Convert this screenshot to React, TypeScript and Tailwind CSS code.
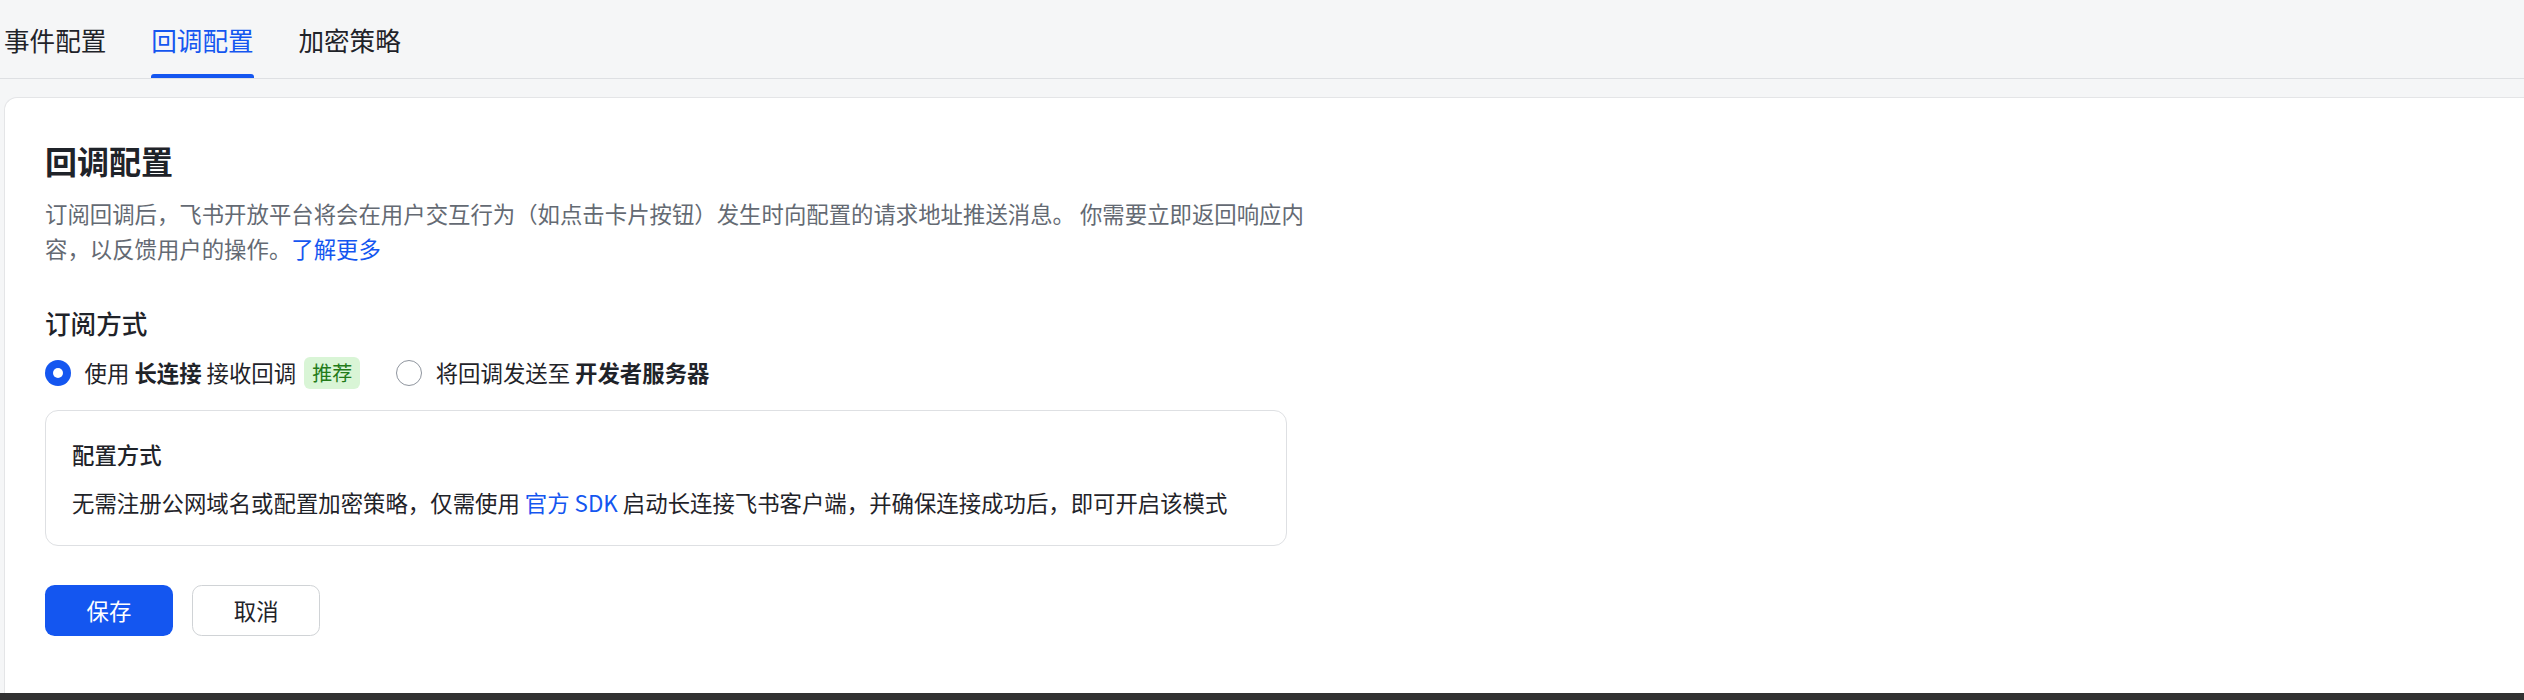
import React from "react";

const tabs = ["事件配置", "回调配置", "加密策略"];

function Tabs() {
  return (
    <div className="flex gap-[44.8px] border-b-[1.5px] border-[#dee0e3] pl-[4px] h-[78.5px]">
      {tabs.map((t, i) => {
        const active = i === 1;
        return (
          <div key={t} className="flex flex-col">
            <div
              className={
                "pt-[21px] leading-[38px] text-[25.6px] " +
                (active ? "text-[#1456f0]" : "text-[#1f2329]")
              }
            >
              {t}
            </div>
            <div className="flex-1" />
            <div
              className={
                "h-[4px] rounded-t-[3px] " + (active ? "bg-[#1456f0]" : "bg-transparent")
              }
            />
          </div>
        );
      })}
    </div>
  );
}

function Radio({ checked }: { checked: boolean }) {
  return checked ? (
    <span className="w-[25.6px] h-[25.6px] rounded-full bg-[#1456f0] flex items-center justify-center shrink-0">
      <span className="w-[10px] h-[10px] rounded-full bg-white" />
    </span>
  ) : (
    <span className="w-[25.6px] h-[25.6px] rounded-full border-[1.6px] border-[#8f959e] bg-white shrink-0" />
  );
}

export default function App() {
  return (
    <div className="min-h-[700px] h-[700px] flex flex-col bg-[#f5f6f7] font-['Noto_Sans_CJK_SC','Noto_Sans',sans-serif] text-[#1f2329]">
      <Tabs />

      <div className="flex-1 mt-[18.5px] ml-[4px] bg-white border-t border-l border-[#e4e5e7] rounded-tl-[13px] p-[40px]">
        <h1 className="text-[32px] leading-[44.8px] font-semibold text-[#1f2329]">回调配置</h1>
        <p className="mt-[12.8px] max-w-[1268px] text-[22.4px] leading-[35.2px] text-[#646a73]">
          订阅回调后，飞书开放平台将会在用户交互行为（如点击卡片按钮）发生时向配置的请求地址推送消息。 你需要立即返回响应内容，以反馈用户的操作。<a href="#" className="text-[#1456f0]">了解更多</a>
        </p>

        <h2 className="mt-[38.4px] text-[25.6px] leading-[38.4px] font-medium">订阅方式</h2>

        <div className="mt-[12.8px] flex items-center h-[35.2px] text-[22.4px]">
          <label className="flex items-center gap-[14px]">
            <Radio checked />
            <span>
              使用 <span className="font-semibold">长连接</span> 接收回调
            </span>
          </label>
          <span className="ml-[8px] h-[32px] px-[8px] rounded-[6px] bg-[#d9f5d6] text-[#237b19] text-[20px] leading-[32px]">
            推荐
          </span>
          <label className="ml-[36px] flex items-center gap-[14px]">
            <Radio checked={false} />
            <span>
              将回调发送至 <span className="font-semibold">开发者服务器</span>
            </span>
          </label>
        </div>

        <div className="mt-[19.2px] w-[1242px] border-[1.5px] border-[#dee0e3] rounded-[13px] px-[26px] py-[25.6px]">
          <div className="text-[22.4px] leading-[35.2px] font-medium">配置方式</div>
          <div className="mt-[12.8px] text-[22.4px] leading-[35.2px]">
            无需注册公网域名或配置加密策略，仅需使用 <a href="#" className="text-[#1456f0]">官方 SDK</a> 启动长连接飞书客户端，并确保连接成功后，即可开启该模式
          </div>
        </div>

        <div className="mt-[38.4px] flex gap-[19.2px]">
          <button className="w-[128px] h-[51.2px] rounded-[9.6px] bg-[#1456f0] text-white text-[22.4px]">
            保存
          </button>
          <button className="w-[128px] h-[51.2px] rounded-[9.6px] border-[1.5px] border-[#d0d3d6] bg-white text-[#1f2329] text-[22.4px]">
            取消
          </button>
        </div>
      </div>

      <div className="h-[7px] bg-[#323232]" />
    </div>
  );
}
